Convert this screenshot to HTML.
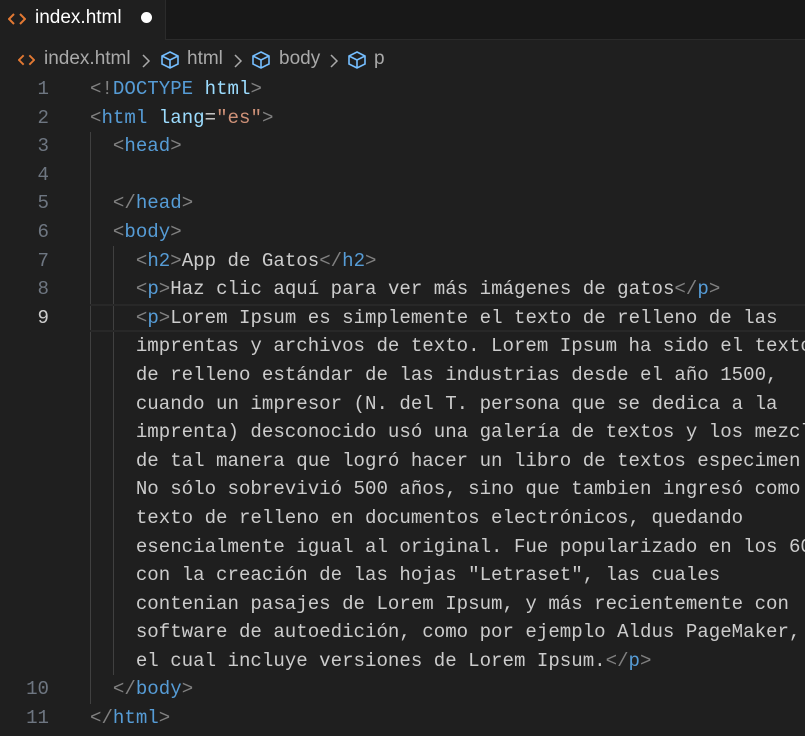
<!DOCTYPE html>
<html><head><style>
body{margin:0;width:805px;height:736px;background:#1f1f1f;overflow:hidden;font-family:"Liberation Sans",sans-serif}
.tabbar{position:absolute;left:0;top:0;width:805px;height:40px;background:#181818;border-bottom:1px solid #2b2b2b;box-sizing:border-box}
.tab{position:absolute;left:0;top:0;width:166px;height:40px;background:#1f1f1f;border-right:1px solid #2b2b2b;box-sizing:border-box}
.tab .name{position:absolute;left:35px;top:7px;color:#ffffff;font-size:19px}
.dot{position:absolute;left:141px;top:12px;width:11px;height:11px;border-radius:50%;background:#fff}
.crumb{position:absolute;top:47px;left:0;height:26px;font-size:19px;color:#a9a9a9;white-space:nowrap}
.ed{position:absolute;left:0;top:75px;width:805px;font-family:"Liberation Mono",monospace;font-size:19.1px}
.row{position:relative;height:28.6px;line-height:28.6px;white-space:pre}
.ln{position:absolute;left:0;width:49px;text-align:right;color:#6e7681}
.tx{position:absolute;left:90px;color:#cccccc}
.cur{box-shadow:inset 0 2px 0 #282828,inset 0 -2px 0 #282828}
.b{color:#808080}.t{color:#569cd6}.a{color:#9cdcfe}.s{color:#ce9178}.w{color:#d4d4d4}
.g{position:absolute;width:1px;background:#404040}
</style></head><body>
<div class="tabbar"><div class="tab">
<svg style="position:absolute;left:8px;top:12px" width="18" height="14" viewBox="0 0 18 14"><path d="M6 2 L1 7 L6 12 M12 2 L17 7 L12 12" stroke="#e37933" stroke-width="2" fill="none"/></svg>
<span class="name">index.html</span><div class="dot"></div></div></div>
<div class="crumb">
<svg style="position:absolute;left:18px;top:6px" width="17" height="14" viewBox="0 0 18 14"><path d="M6 2 L1 7 L6 12 M12 2 L17 7 L12 12" stroke="#e37933" stroke-width="2" fill="none"/></svg>
<span style="position:absolute;left:44px;top:1px">index.html</span>
<svg style="position:absolute;left:141px;top:6px" width="10" height="16" viewBox="0 0 10 16"><path d="M2 2 L8 8 L2 14" stroke="#a9a9a9" stroke-width="1.5" fill="none"/></svg>
<svg style="position:absolute;left:160px;top:3px" width="20" height="20" viewBox="0 0 20 20"><path d="M10 2 L18 6 L18 14 L10 18 L2 14 L2 6 Z M2 6 L10 10 L18 6 M10 10 L10 18" stroke="#75beff" stroke-width="1.6" fill="none"/></svg>
<span style="position:absolute;left:187px;top:1px">html</span>
<svg style="position:absolute;left:233px;top:6px" width="10" height="16" viewBox="0 0 10 16"><path d="M2 2 L8 8 L2 14" stroke="#a9a9a9" stroke-width="1.5" fill="none"/></svg>
<svg style="position:absolute;left:251px;top:3px" width="20" height="20" viewBox="0 0 20 20"><path d="M10 2 L18 6 L18 14 L10 18 L2 14 L2 6 Z M2 6 L10 10 L18 6 M10 10 L10 18" stroke="#75beff" stroke-width="1.6" fill="none"/></svg>
<span style="position:absolute;left:279px;top:1px">body</span>
<svg style="position:absolute;left:329px;top:6px" width="10" height="16" viewBox="0 0 10 16"><path d="M2 2 L8 8 L2 14" stroke="#a9a9a9" stroke-width="1.5" fill="none"/></svg>
<svg style="position:absolute;left:347px;top:3px" width="20" height="20" viewBox="0 0 20 20"><path d="M10 2 L18 6 L18 14 L10 18 L2 14 L2 6 Z M2 6 L10 10 L18 6 M10 10 L10 18" stroke="#75beff" stroke-width="1.6" fill="none"/></svg>
<span style="position:absolute;left:374px;top:1px">p</span>
</div>
<div class="g" style="left:90px;top:132px;height:572px"></div>
<div class="g" style="left:113px;top:246px;height:429px"></div>
<div class="ed">
<div class="row"><span class="ln">1</span><span class="tx"><span class="b">&lt;!</span><span class="t">DOCTYPE</span> <span class="a">html</span><span class="b">&gt;</span></span></div>
<div class="row"><span class="ln">2</span><span class="tx"><span class="b">&lt;</span><span class="t">html</span> <span class="a">lang</span><span class="w">=</span><span class="s">"es"</span><span class="b">&gt;</span></span></div>
<div class="row"><span class="ln">3</span><span class="tx">  <span class="b">&lt;</span><span class="t">head</span><span class="b">&gt;</span></span></div>
<div class="row"><span class="ln">4</span></div>
<div class="row"><span class="ln">5</span><span class="tx">  <span class="b">&lt;/</span><span class="t">head</span><span class="b">&gt;</span></span></div>
<div class="row"><span class="ln">6</span><span class="tx">  <span class="b">&lt;</span><span class="t">body</span><span class="b">&gt;</span></span></div>
<div class="row"><span class="ln">7</span><span class="tx">    <span class="b">&lt;</span><span class="t">h2</span><span class="b">&gt;</span>App de Gatos<span class="b">&lt;/</span><span class="t">h2</span><span class="b">&gt;</span></span></div>
<div class="row"><span class="ln">8</span><span class="tx">    <span class="b">&lt;</span><span class="t">p</span><span class="b">&gt;</span>Haz clic aquí para ver más imágenes de gatos<span class="b">&lt;/</span><span class="t">p</span><span class="b">&gt;</span></span></div>
<div class="row cur" style="margin-left:90px"><span class="ln" style="left:-90px;color:#cccccc">9</span><span class="tx" style="left:0">    <span class="b">&lt;</span><span class="t">p</span><span class="b">&gt;</span>Lorem Ipsum es simplemente el texto de relleno de las</span></div>
<div class="row"><span class="tx">    imprentas y archivos de texto. Lorem Ipsum ha sido el texto</span></div>
<div class="row"><span class="tx">    de relleno estándar de las industrias desde el año 1500,</span></div>
<div class="row"><span class="tx">    cuando un impresor (N. del T. persona que se dedica a la</span></div>
<div class="row"><span class="tx">    imprenta) desconocido usó una galería de textos y los mezcló</span></div>
<div class="row"><span class="tx">    de tal manera que logró hacer un libro de textos especimen.</span></div>
<div class="row"><span class="tx">    No sólo sobrevivió 500 años, sino que tambien ingresó como</span></div>
<div class="row"><span class="tx">    texto de relleno en documentos electrónicos, quedando</span></div>
<div class="row"><span class="tx">    esencialmente igual al original. Fue popularizado en los 60s</span></div>
<div class="row"><span class="tx">    con la creación de las hojas "Letraset", las cuales</span></div>
<div class="row"><span class="tx">    contenian pasajes de Lorem Ipsum, y más recientemente con</span></div>
<div class="row"><span class="tx">    software de autoedición, como por ejemplo Aldus PageMaker,</span></div>
<div class="row"><span class="tx">    el cual incluye versiones de Lorem Ipsum.<span class="b">&lt;/</span><span class="t">p</span><span class="b">&gt;</span></span></div>
<div class="row"><span class="ln">10</span><span class="tx">  <span class="b">&lt;/</span><span class="t">body</span><span class="b">&gt;</span></span></div>
<div class="row"><span class="ln">11</span><span class="tx"><span class="b">&lt;/</span><span class="t">html</span><span class="b">&gt;</span></span></div>
</div>
</body></html>
